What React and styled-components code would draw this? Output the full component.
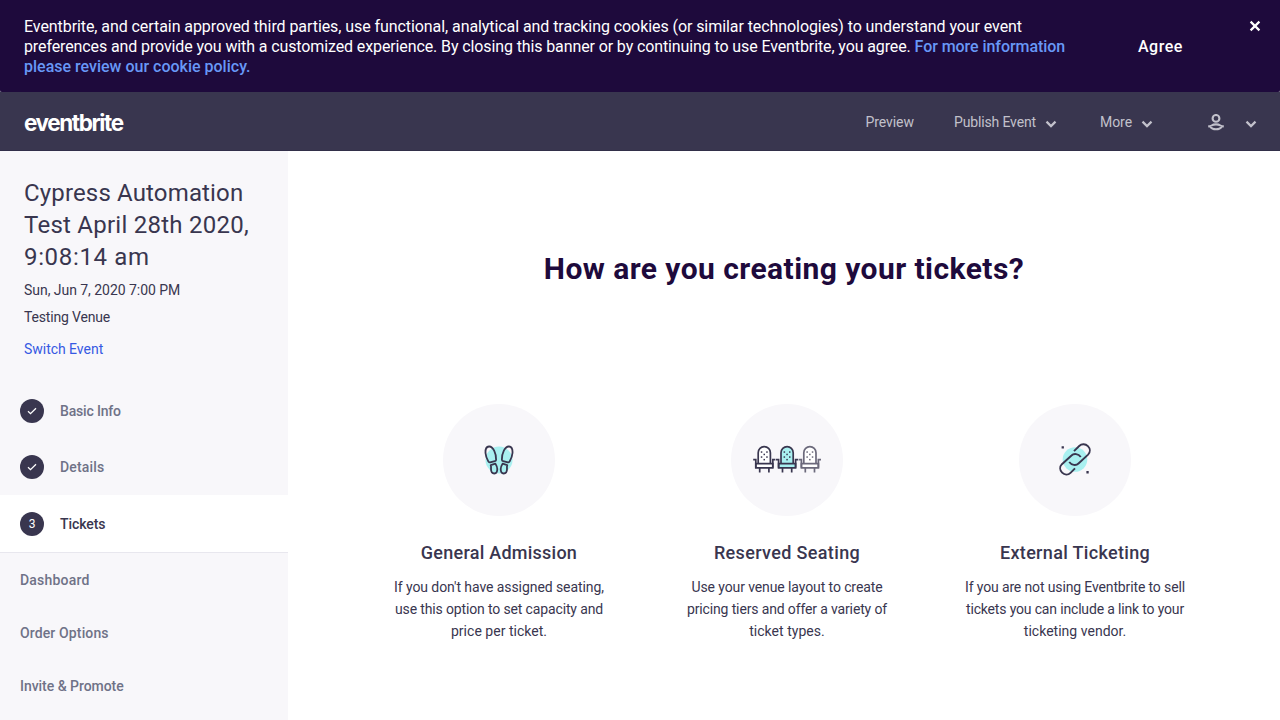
import React from 'react';
import styled, { createGlobalStyle } from 'styled-components';

const GlobalStyle = createGlobalStyle`
  *, *::before, *::after { box-sizing: border-box; }
  html, body { margin: 0; height: 100%; overflow: hidden; }
  body { font-family: Roboto, "Liberation Sans", sans-serif; color: #39364f; background: #fff; }
  h1, h2, h3, p { margin: 0; font-weight: 400; }
  svg { display: block; flex: none; }
  a { text-decoration: none; }
`;

const Page = styled.div`
  height: 720px;
  display: flex;
  flex-direction: column;
  overflow: hidden;
`;

const Line = styled.span`
  display: block;
  white-space: nowrap;
  letter-spacing: ${(p) => p.$ls || 0}px;
`;

const BannerBack = styled.div`
  flex: none;
  height: 92px;
  background: #8d8a9b;
`;
const Banner = styled.div`
  height: 100%;
  display: flex;
  padding: 17px 19px 0 24px;
  background: #1e0a3c;
  border-radius: 0 0 2px 2px;
  color: #fff;
  font-size: 16px;
  line-height: 20px;
`;
const BannerText = styled.p`
  width: 1114px;
`;
const PolicyLink = styled.a`
  color: #6898f7;
  font-weight: 500;
  letter-spacing: ${(p) => p.$ls}px;
`;
const AgreeButton = styled.button`
  align-self: flex-start;
  margin: 20px 0 0;
  padding: 0;
  border: 0;
  background: none;
  color: #fff;
  font: 500 16px/20px Roboto, sans-serif;
  letter-spacing: 0.5px;
`;
const CloseButton = styled.button`
  align-self: flex-start;
  margin: 3px 0 0 auto;
  padding: 0;
  border: 0;
  background: none;
`;

const TopBar = styled.header`
  flex: none;
  height: 59px;
  display: flex;
  align-items: center;
  justify-content: space-between;
  padding: 0 23px 0 24px;
  background: #39364f;
  border-bottom: 1px solid #322f49;
`;
const Logo = styled.a`
  color: #fff;
  font: 700 22.5px/28px Inter, sans-serif;
  letter-spacing: -1.42px;
  padding-top: 3px;
`;
const Nav = styled.nav`
  display: flex;
  align-items: center;
  color: #c2c1cb;
  font-size: 14px;
  line-height: 20px;
  padding-top: 2px;
`;
const NavItem = styled.div`
  display: flex;
  align-items: center;
  gap: ${(p) => p.$gap || 9}px;
  margin-left: ${(p) => p.$before || 0}px;
`;

const Body = styled.div`
  flex: 1;
  min-height: 0;
  display: flex;
`;
const Sidebar = styled.aside`
  flex: none;
  width: 288px;
  background: #f8f7fa;
  overflow: hidden;
`;
const EventInfo = styled.section`
  height: 232px;
  padding: 26px 24px 0;
  font-size: 14px;
  line-height: 20px;
`;
const EventTitle = styled.h1`
  font-size: 24px;
  line-height: 32px;
  margin-bottom: 7px;
`;
const Meta = styled.p`
  margin-bottom: 7px;
`;
const SwitchLink = styled.a`
  display: block;
  margin-top: 12px;
  color: #3659e3;
`;
const Step = styled.div`
  height: ${(p) => (p.$active ? 58 : 56)}px;
  display: flex;
  align-items: center;
  gap: 16px;
  padding-left: 20px;
  background: ${(p) => (p.$active ? '#fff' : 'transparent')};
  color: ${(p) => (p.$active ? '#39364f' : '#6f7287')};
  border-bottom: ${(p) => (p.$active ? '1px solid #e8e7ee' : '0')};
  font-size: 14px;
  font-weight: 500;
`;
const StepMark = styled.span`
  width: 24px;
  height: 24px;
  border-radius: 50%;
  display: flex;
  align-items: center;
  justify-content: center;
  background: #39364f;
  color: #fff;
  font-size: 12px;
  font-weight: 400;
`;
const SideLink = styled.a`
  height: 53px;
  display: flex;
  align-items: center;
  padding: 1px 0 0 20px;
  color: #6f7287;
  font-size: 14px;
  font-weight: 500;
`;

const Main = styled.main`
  flex: 1;
  display: flex;
  flex-direction: column;
  align-items: center;
  padding-top: 98px;
`;
const Heading = styled.h2`
  color: #1e0a3c;
  font-size: 30px;
  line-height: 40px;
  font-weight: 700;
`;
const Options = styled.div`
  display: flex;
  margin: 115px 0 0 6px;
`;
const Option = styled.section`
  width: 288px;
  display: flex;
  flex-direction: column;
  align-items: center;
  text-align: center;
`;
const Disc = styled.div`
  width: 112px;
  height: 112px;
  border-radius: 50%;
  display: flex;
  align-items: center;
  justify-content: center;
  background: #f8f7fa;
`;
const OptionTitle = styled.h3`
  margin: 25px 0 11px;
  font-size: 18px;
  line-height: 24px;
  font-weight: 500;
`;
const OptionText = styled.p`
  font-size: 14px;
  line-height: 22px;
`;

const Chevron = () => (
  <svg width="12" height="8" viewBox="0 0 12 8" style={{ marginTop: 3 }}>
    <path d="M1.500 1.600 6 6.100l4.500-4.500" fill="none" stroke="#c2c1cb" strokeWidth="2.200" />
  </svg>
);
const CloseIcon = () => (
  <svg width="12" height="12" viewBox="0 0 12 12">
    <path d="M1.600 1.600 10.400 10.400M10.400 1.600 1.600 10.400" stroke="#fff" strokeWidth="2.200" />
  </svg>
);
const UserIcon = () => (
  <svg width="16" height="17" viewBox="0 0 16 17" fill="none" stroke="#c2c1cb" strokeWidth="2.100">
    <circle cx="8" cy="4.400" r="3.400" />
    <path d="M.2 12.400c2 0 2.200-.1 3.400-.9C4.800 10.700 6.200 10.400 8 10.400s3.200.3 4.400 1.100c1.200.8 1.400.9 3.400.9M2.200 12.700C3.500 14.700 5.500 15.300 8 15.300s4.500-.6 5.800-2.600" />
  </svg>
);
const CheckIcon = () => (
  <svg width="10" height="8" viewBox="0 0 10 8">
    <path d="M1 4.300 3.500 6.700 9 1.200" fill="none" stroke="#fff" strokeWidth="1.300" />
  </svg>
);

const FeetIcon = () => (
  <svg width="30" height="30" viewBox="0 0 30 30">
    <circle cx="15" cy="15" r="13.500" fill="#a9f0f0" />
    <g fill="none" stroke="#39364f" strokeWidth="1.800" strokeLinejoin="round">
      {[undefined, 'translate(30 0) scale(-1 1)'].map((t, i) => (
        <g key={i} transform={t}>
          <path d="M5 1.500C2.300 1.700 1.300 5 1.500 8c.2 3 1.500 6 2.800 8.400.4.800 1 1.100 1.800.9l4.800-1.100c.8-.2 1.200-.7 1.200-1.500C12.200 8.500 9.200 1.200 5 1.500Z" />
          <path d="m6.700 20.200 4.700-1.500c.6 1 1.900 3 1.900 5.300 0 2.700-1.100 4.500-3 4.500C8 28.500 7 26.500 7 24c0-1.500.3-2.500-.3-3.800Z" />
        </g>
      ))}
    </g>
  </svg>
);

const Seat = ({ x, fill, color }) => (
  <g transform={`translate(${x} 0)`} stroke={color} fill="none" strokeWidth="1.700">
    <path fill={fill} d="M5.200 18.500V7.700a6.100 6.100 0 0 1 12.200 0v10.800" />
    <path fill={fill} d="M2.800 18.700h17v4.100H2.800Z" />
    <path d="M.2 14.700h2.600v8.100M22.400 14.700h-2.600v8.100M6.700 23v4.500M15.900 23v4.500" />
    <g fill={color} stroke="none">
      {[[8, 7], [13.400, 7], [10.700, 9.400], [8, 12], [13.400, 12], [10.700, 14.600]].map(([a, b]) => (
        <rect key={`${a}-${b}`} x={a - 0.200} y={b - 0.700} width="1.500" height="1.500" />
      ))}
    </g>
  </g>
);
const SeatsIcon = () => (
  <svg width="68" height="30" viewBox="0 0 68 30">
    <Seat x={0} fill="#fff" color="#39364f" />
    <Seat x={22.800} fill="#a9f0f0" color="#39364f" />
    <Seat x={45.600} fill="#fff" color="#6b697b" />
  </svg>
);

const LinkIcon = () => (
  <svg width="34" height="34" viewBox="0 0 34 34">
    <circle cx="17" cy="16.500" r="12.300" fill="#a9f0f0" />
    <g fill="none" stroke="#39364f" strokeWidth="1.900">
      <path d="M16 8.200 21.200 3C23.700.6 27.500.8 29.900 3.200s2.600 6 .2 8.400L20.500 20.500c-2.500 2.500-6.800 1.800-9.300-1.500" />
      <path d="M17 25.300 12.500 29.800C10 32.200 6.500 32 4.100 29.600s-2.600-6-.2-8.400L13.500 12.500c2.500-2.500 6.800-1.800 9.300 1.500" />
    </g>
    <path d="M3.600 3.200h2.300v2.300H3.600ZM28.400 28.100h2.300v2.300h-2.300Z" fill="#39364f" />
  </svg>
);

const options = [
  {
    icon: <FeetIcon />, title: 'General Admission', ls: 0.25,
    lines: [["If you don't have assigned seating,", -0.073], ['use this option to set capacity and', -0.14], ['price per ticket.', 0.02]],
  },
  {
    icon: <SeatsIcon />, title: 'Reserved Seating', ls: 0.35,
    lines: [['Use your venue layout to create', -0.1], ['pricing tiers and offer a variety of', -0.14], ['ticket types.', 0.04]],
  },
  {
    icon: <LinkIcon />, title: 'External Ticketing', ls: 0.33,
    lines: [['If you are not using Eventbrite to sell', -0.135], ['tickets you can include a link to your', -0.165], ['ticketing vendor.', 0.02]],
  },
];

export default function App() {
  return (
    <Page>
      <GlobalStyle />
      <BannerBack>
        <Banner>
          <BannerText>
            <Line $ls={-0.074}>
              Eventbrite, and certain approved third parties, use functional, analytical and tracking cookies (or similar technologies) to understand your event
            </Line>
            <Line $ls={-0.113}>
              preferences and provide you with a customized experience. By closing this banner or by continuing to use Eventbrite, you agree.{' '}
              <PolicyLink $ls={-0.06}>For more information</PolicyLink>
            </Line>
            <Line><PolicyLink $ls={0}>please review our cookie policy.</PolicyLink></Line>
          </BannerText>
          <AgreeButton>Agree</AgreeButton>
          <CloseButton aria-label="Close"><CloseIcon /></CloseButton>
        </Banner>
      </BannerBack>
      <TopBar>
        <Logo>eventbrite</Logo>
        <Nav>
          <NavItem><Line $ls={-0.05}>Preview</Line></NavItem>
          <NavItem $before={40}><Line $ls={-0.14}>Publish Event</Line><Chevron /></NavItem>
          <NavItem $before={43}><Line $ls={-0.06}>More</Line><Chevron /></NavItem>
          <NavItem $before={55} $gap={21}><UserIcon /><Chevron /></NavItem>
        </Nav>
      </TopBar>
      <Body>
        <Sidebar>
          <EventInfo>
            <EventTitle>
              <Line $ls={0.15}>Cypress Automation</Line>
              <Line $ls={0.25}>Test April 28th 2020,</Line>
              <Line $ls={0.66}>9:08:14 am</Line>
            </EventTitle>
            <Meta><Line $ls={-0.04}>Sun, Jun 7, 2020 7:00 PM</Line></Meta>
            <Meta><Line $ls={-0.17}>Testing Venue</Line></Meta>
            <SwitchLink><Line $ls={-0.03}>Switch Event</Line></SwitchLink>
          </EventInfo>
          <Step><StepMark><CheckIcon /></StepMark><Line $ls={-0.17}>Basic Info</Line></Step>
          <Step><StepMark><CheckIcon /></StepMark><Line $ls={0.18}>Details</Line></Step>
          <Step $active><StepMark>3</StepMark><Line $ls={-0.06}>Tickets</Line></Step>
          <SideLink><Line $ls={0.2}>Dashboard</Line></SideLink>
          <SideLink><Line $ls={0.13}>Order Options</Line></SideLink>
          <SideLink><Line $ls={-0.04}>Invite &amp; Promote</Line></SideLink>
        </Sidebar>
        <Main>
          <Heading><Line $ls={0.44}>How are you creating your tickets?</Line></Heading>
          <Options>
            {options.map((o) => (
              <Option key={o.title}>
                <Disc>{o.icon}</Disc>
                <OptionTitle><Line $ls={o.ls}>{o.title}</Line></OptionTitle>
                <OptionText>
                  {o.lines.map(([text, ls]) => <Line key={text} $ls={ls}>{text}</Line>)}
                </OptionText>
              </Option>
            ))}
          </Options>
        </Main>
      </Body>
    </Page>
  );
}
